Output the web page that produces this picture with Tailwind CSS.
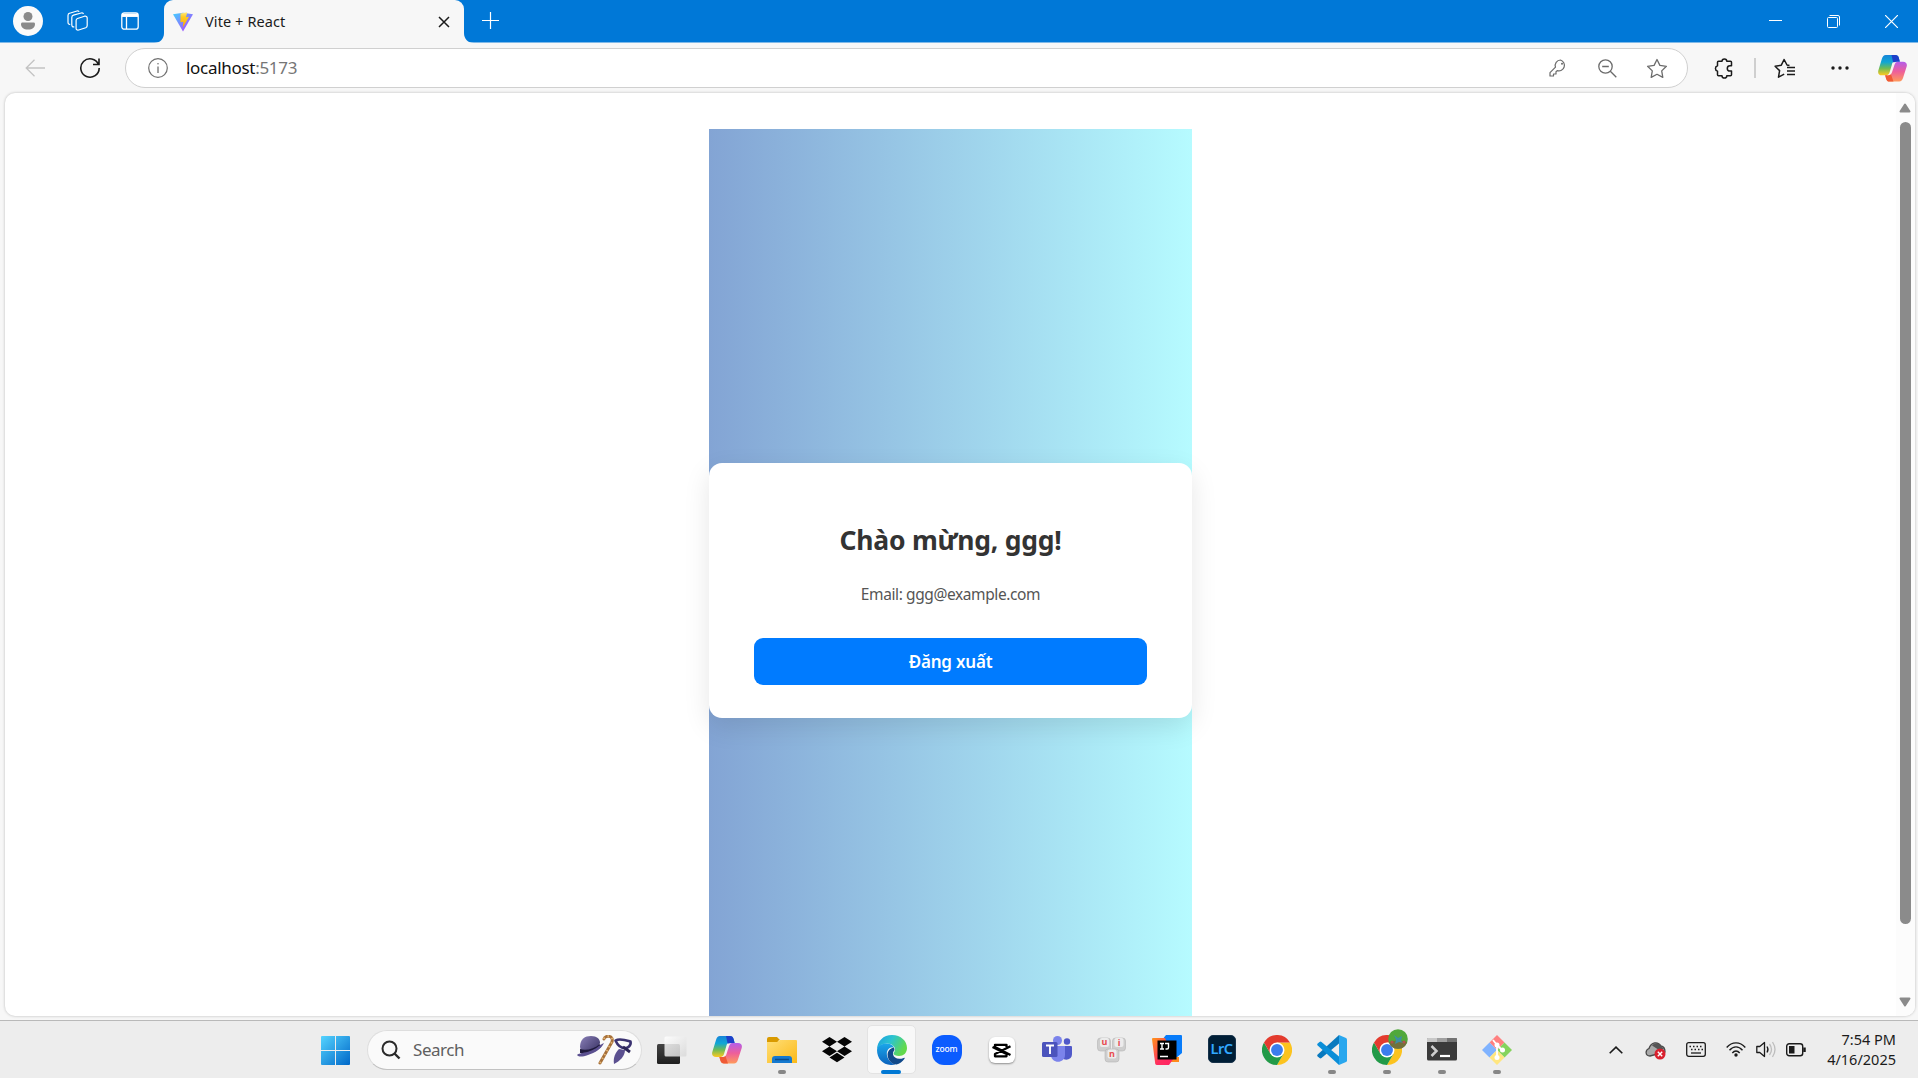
<!DOCTYPE html>
<html lang="vi">
<head>
<meta charset="utf-8">
<title>Vite + React</title>
<script src="https://cdn.jsdelivr.net/npm/@tailwindcss/browser@4"></script>
</head>
<body class="w-[1918px] h-[1078px] overflow-hidden flex flex-col bg-[#f7f7f7] font-['Noto_Sans','Open_Sans',sans-serif]">
<svg class="absolute size-0">
  <defs>
    <linearGradient id="cpL" x1="0" y1="0" x2="0" y2="1"><stop offset="0" stop-color="#1784d8"/><stop offset=".35" stop-color="#0fa6d6"/><stop offset=".65" stop-color="#6cbb57"/><stop offset="1" stop-color="#ffc91f"/></linearGradient>
    <linearGradient id="cpR" x1="0" y1="0" x2="0" y2="1"><stop offset="0" stop-color="#b35eea"/><stop offset=".5" stop-color="#ee5f9a"/><stop offset="1" stop-color="#ff9a5b"/></linearGradient>
    <linearGradient id="viteA" x1="0" y1="0" x2="1" y2="1"><stop offset="0" stop-color="#41d1ff"/><stop offset="1" stop-color="#bd34fe"/></linearGradient>
    <linearGradient id="viteB" x1="0" y1="0" x2="0" y2="1"><stop offset="0" stop-color="#ffea83"/><stop offset=".3" stop-color="#ffcc22"/><stop offset="1" stop-color="#ffa800"/></linearGradient>
    <linearGradient id="win" x1="0" y1="0" x2="1" y2="1"><stop offset="0" stop-color="#55d4ff"/><stop offset="1" stop-color="#0067c8"/></linearGradient>
    <linearGradient id="fold" x1="0" y1="0" x2="1" y2="1"><stop offset="0" stop-color="#ffdf78"/><stop offset="1" stop-color="#fbb917"/></linearGradient>
    <linearGradient id="edgeT" x1="0" y1="0" x2="1" y2=".4"><stop offset="0" stop-color="#1b9de2"/><stop offset=".5" stop-color="#2cc4cf"/><stop offset="1" stop-color="#62d94c"/></linearGradient>
    <linearGradient id="edgeB" x1="0" y1="0" x2="0" y2="1"><stop offset="0" stop-color="#1ba7ea"/><stop offset="1" stop-color="#0c62bd"/></linearGradient>
    <linearGradient id="ijB" x1="0" y1="0" x2="1" y2="1"><stop offset="0" stop-color="#ff9419"/><stop offset=".6" stop-color="#ff2d60"/><stop offset="1" stop-color="#ff2162"/></linearGradient>
    <linearGradient id="hat" x1="0" y1="0" x2="1" y2="1"><stop offset="0" stop-color="#8a80b8"/><stop offset="1" stop-color="#2e2858"/></linearGradient>
    <linearGradient id="tv1" x1="0" y1="0" x2="0" y2="1"><stop offset="0" stop-color="#444"/><stop offset="1" stop-color="#1f1f1f"/></linearGradient>
    <linearGradient id="tv2" x1="0" y1="0" x2="1" y2="1"><stop offset="0" stop-color="#fff"/><stop offset="1" stop-color="#d8d8d8"/></linearGradient>
    <symbol id="copilot" viewBox="0 0 30 28">
      <path d="M8 0h10c2 0 3 1 3.600 3l1 4h-3.500c-2 0-3 1-3.600 3l-2.500 8c-.6 2-2 3-4 3H4c-3 0-4.500-2-3.700-5L4 4c.7-2.500 2-4 4-4z" fill="url(#cpL)"/>
      <path d="M14 0h4c2 0 3 1 3.600 3l1 4h-3.500c-1.500 0-2.500.6-3.200 2z" fill="#1d3fc9"/>
      <path d="M22 27.500H12c-2 0-3-1-3.600-3l-1-3.500h2.500c2 0 3-1 3.600-3l2.500-8c.6-2 2-3 4-3H26c3 0 4.500 2 3.700 5l-3.700 11.500c-.7 2.500-2 4-4 4z" fill="url(#cpR)"/>
      <path d="M16 27.500h-4c-2 0-3-1-3.600-3l-1-3.500h2.500c1.500 0 2.500-.6 3.200-2z" fill="#ef5a36"/>
      <path d="M15.500 7.500h4.200c-1.200 0-2.200 1-2.800 3l-2.400 7.500c-.7 2.200-2 3-3.800 3h-1.600c1.600-.3 2.400-1.500 2.900-3l2.200-7.500c.4-1.500.6-2.400 1.300-3z" fill="#f6f2ee"/>
    </symbol>
    <symbol id="chrome" viewBox="0 0 48 48">
      <path d="M24 12h20.800A24 24 0 0 1 24 48L34.400 30z" fill="#fcc31e"/>
      <path d="M13.600 30 3.200 12A24 24 0 0 0 24 48l10.400-18z" fill="#229a48"/>
      <path d="M24 12h20.800A24 24 0 0 0 3.200 12l10.400 18z" fill="#e33b2e"/>
      <circle cx="24" cy="24" r="12" fill="#fff"/><circle cx="24" cy="24" r="9.500" fill="#3b7ded"/>
    </symbol>
  </defs>
</svg>

<!-- Tab strip -->
<header class="h-[43px] shrink-0 bg-[#0078d7] border-b border-[#7fb9e8] flex items-start">
  <div class="w-[164px] h-[42px] flex items-center relative">
    <div class="ml-[13px] size-[30px] rounded-full bg-[#fafafa] flex items-center justify-center">
      <svg width="16" height="18" fill="#8a8a8a"><circle cx="8" cy="4.500" r="4.500"/><path d="M2.500 10.500h11c1 0 1.500.6 1.500 1.500 0 3.500-2.500 5.500-7 5.500s-7-2-7-5.500c0-.9.500-1.500 1.500-1.500z"/></svg>
    </div>
    <svg class="ml-[24px]" width="22" height="22" fill="none" stroke="#fff" stroke-width="1.200" stroke-linejoin="round"><path d="m10.500 8.500 7-2.300c1.500-.4 2.700.3 2.700 1.800v7.500c0 1-.5 1.800-1.500 2.200l-7 2.300c-1.500.4-2.600-.3-2.600-1.800v-7.700q0-1.400 1.400-2z"/><path d="M7.300 16.800c-1.800.3-2.500-.6-2.500-2V7.500c0-1.200.6-2 1.700-2.300L14.200 3c1.200-.3 2 .1 2.200 1"/><path d="M3.200 14.300c-1.500.2-2.200-.6-2.200-2V5.500c0-1.200.6-2 1.700-2.300L10 1c1-.3 1.800.1 2 .9"/></svg>
    <svg class="ml-[32px]" width="18" height="18" fill="none" stroke="#fff" stroke-width="1.300"><rect x=".8" y=".8" width="16.400" height="16.400" rx="2.500"/><path d="M1 3.200h16" stroke-width="3.500"/><path d="M5.500 5v12"/></svg>
    <svg class="absolute right-0 -bottom-px" width="10" height="10"><path d="M10 0v10H0C6 10 10 6 10 0z" fill="#f7f7f7"/></svg>
  </div>
  <div class="w-[300px] h-[43px] rounded-t-[9px] bg-[#f7f7f7] flex items-center pl-[8px] relative z-10">
    <svg width="22" height="20" viewBox="0 0 22 20"><path d="M1 2.200 11 .8l10 1.400L11 19.500z" fill="url(#viteA)"/><path d="m8.500 1.500 6.700-1.200-1.200 5 3-.6-6.300 11 .7-6-2.900.6z" fill="url(#viteB)"/></svg>
    <span class="ml-[11px] text-[14.500px] leading-5 tracking-[0.100px] text-[#1b1b1b] pb-[2px]">Vite + React</span>
    <svg class="absolute left-[274px] top-[16px]" width="12" height="12" stroke="#1b1b1b" stroke-width="1.500"><path d="m1 1 10 10M11 1 1 11"/></svg>
  </div>
  <div class="flex-1 h-[42px] flex items-start relative">
    <svg class="absolute left-0 -bottom-px" width="10" height="10"><path d="M0 0v10h10C4 10 0 6 0 0z" fill="#f7f7f7"/></svg>
    <svg class="ml-[18px] mt-[12px]" width="17" height="17" stroke="#fff" stroke-width="1.200"><path d="M8.500 0v17M0 8.500h17"/></svg>
    <div class="ml-auto flex mr-[20px] mt-[15px]">
      <svg width="13" height="13" stroke="#fff"><path d="M0 5.500h13"/></svg>
      <svg class="ml-[45px]" width="13" height="13" fill="none" stroke="#fff"><rect x=".5" y="2.500" width="10" height="10" rx="1"/><path d="M2.500.5h8.500q1.500 0 1.500 1.500v8.500"/></svg>
      <svg class="ml-[45px]" width="13" height="13" stroke="#fff" stroke-width="1.200"><path d="m0 0 13 13M13 0 0 13"/></svg>
    </div>
  </div>
</header>

<!-- Toolbar -->
<nav class="h-[50px] shrink-0 flex items-center">
  <svg class="ml-[25px]" width="20" height="18" fill="none" stroke="#c3c3c3" stroke-width="1.300"><path d="M20 9H1.500M9.500.8 1.200 9l8.300 8.200"/></svg>
  <svg class="ml-[34px]" width="22" height="22" fill="none" stroke="#1b1b1b" stroke-width="1.600"><path d="M19.500 7.500A9.200 9.200 0 1 0 20.200 11M20 1.500v6h-6"/></svg>
  <div class="ml-[24px] w-[1563px] h-[40px] rounded-full bg-white border border-[#d0d0d0] flex items-center">
    <svg class="ml-[22px]" width="20" height="20" fill="none" stroke="#707070" stroke-width="1.200"><circle cx="10" cy="10" r="9.300"/><path d="M10 8.500V15" stroke-width="1.300"/><circle cx="10" cy="5.800" r=".8" fill="#707070" stroke="none"/></svg>
    <span class="ml-[18px] pb-px text-[17px] leading-6 tracking-[-0.3px] text-[#111]">localhost<span class="text-[#767676]">:5173</span></span>
    <svg class="ml-auto" width="18" height="18" fill="none" stroke="#6b6b6b" stroke-width="1.200" stroke-linejoin="round"><path d="M11.500 1a5.400 5.400 0 0 0-5 7.200L1 13.700V17h3.500v-2H7v-2.300l1.200-1.100A5.400 5.400 0 1 0 11.500 1z"/><circle cx="13" cy="4.800" r="1" fill="#6b6b6b" stroke="none"/></svg>
    <svg class="ml-[31px]" width="19" height="19" fill="none" stroke="#6b6b6b" stroke-width="1.300"><circle cx="7.500" cy="7.500" r="6.700"/><path d="m12.300 12.300 6 6M4.200 7.500h6.600"/></svg>
    <svg class="ml-[29px] mr-[19px]" width="22" height="21" fill="none" stroke="#6b6b6b" stroke-width="1.300" stroke-linejoin="round"><path d="m11 1.500 2.900 5.900 6.500.9-4.700 4.600 1.100 6.500L11 16.300l-5.800 3.100 1.100-6.500L1.600 8.300l6.500-.9z"/></svg>
  </div>
  <svg class="ml-[25px]" width="20" height="21" fill="none" stroke="#1b1b1b" stroke-width="1.500" stroke-linejoin="round"><path d="M5.500 3.300H9a2.400 2.400 0 0 1 4.800 0h3.700q1 0 1 1v3.400h-1.500a2.600 2.600 0 0 0 0 5.400h1.500v3.600q0 1-1 1h-3.700a2.400 2.400 0 0 1-4.800 0H5.500q-1 0-1-1v-3.600a2.800 2.800 0 0 1 0-5.400V4.300q0-1 1-1z"/></svg>
  <div class="ml-[21px] w-[2px] h-[20px] bg-[#cfcfcf]"></div>
  <svg class="ml-[18px]" width="22" height="21" fill="none" stroke="#1b1b1b" stroke-width="1.500" stroke-linejoin="round"><path d="M15.500 7.500 13 7l-2.900-5.500-2.800 5.700-6.200 1 4.500 4.400-1.100 6.600 5.700-3"/><path d="M13 9.500h8M13 13h8M13 16.500h8"/></svg>
  <svg class="ml-[35px]" width="18" height="4" fill="#1b1b1b"><circle cx="2" cy="2" r="1.700"/><circle cx="9" cy="2" r="1.700"/><circle cx="16" cy="2" r="1.700"/></svg>
  <svg class="ml-[29px]" width="29" height="27"><use href="#copilot"/></svg>
</nav>

<!-- Page viewport -->
<div class="h-[927px] shrink-0 pl-[5px] pr-[3px] pb-[4px]">
  <main class="h-full rounded-[10px] bg-white overflow-hidden flex shadow-[0_0_3px_rgba(0,0,0,0.25)]">
    <section class="w-[1891px] h-full pt-[36px] pl-[704px]">
      <div class="w-[483px] h-[887px] bg-linear-to-r/srgb from-[#83a4d4] to-[#b6fbff] pt-[334px]">
        <div class="h-[255px] rounded-[13px] bg-white shadow-[0_9px_27px_rgba(0,0,0,0.1)] px-[45px] flex flex-col text-center">
          <h1 class="mt-[58px] h-[38px] leading-[38px] text-[26.500px] font-bold tracking-[-0.25px] text-[#333] whitespace-nowrap">Chào mừng, ggg!</h1>
          <p class="mt-[22px] h-[26px] leading-[26px] text-[15.500px] tracking-[-0.4px] text-[#555]">Email: ggg@example.com</p>
          <button class="mt-[31px] h-[47px] rounded-[9px] bg-[#007bff] text-white text-[17px] font-semibold tracking-[-0.2px]">Đăng xuất</button>
        </div>
      </div>
    </section>
    <div class="w-[19px] h-full bg-[#fcfcfc] flex flex-col items-center pr-px">
      <svg class="mt-[10px]" width="12" height="10"><path d="M6 1.500 10.500 8.500h-9z" fill="#8b8b8b" stroke="#8b8b8b" stroke-width="2" stroke-linejoin="round"/></svg>
      <div class="mt-[9px] w-[11px] h-[802px] rounded-full bg-[#8b8b8b]"></div>
      <svg class="mt-[73px]" width="12" height="10"><path d="M6 8.500 10.500 1.500h-9z" fill="#8b8b8b" stroke="#8b8b8b" stroke-width="2" stroke-linejoin="round"/></svg>
    </div>
  </main>
</div>

<!-- Taskbar -->
<footer class="h-[58px] shrink-0 bg-[#ededed] border-t border-[#b9b9b9] flex items-center">
  <svg class="ml-[321px] mt-px" width="29" height="29" fill="url(#win)"><path d="M1 0h13v14H0V1q0-1 1-1zM15 0h13q1 0 1 1v13H15zM0 15h14v14H1q-1 0-1-1zM15 15h14v13q0 1-1 1H15z"/></svg>
  <div class="ml-[17px] w-[275px] h-[40px] rounded-full bg-[#fafafa] border border-[#dedede] border-b-[#c2c2c2] flex items-center relative">
    <svg class="ml-[13px]" width="20" height="20" fill="none" stroke="#2b2b2b" stroke-width="2"><circle cx="8.500" cy="8.500" r="7"/><path d="m13.500 13.500 5 5" stroke-width="2.400"/></svg>
    <span class="ml-[12px] text-[17px] leading-6 tracking-[-0.45px] text-[#5f5f5f]">Search</span>
    <svg class="absolute left-[208px] top-[4px]" width="58" height="31">
      <path d="M4 12C4 4 9 1 15 1s9 3 9 7l-4 8-14 5z" fill="url(#hat)"/><path d="M4 14c6 2 14 0 20-5l1 3C20 17 12 19 4 18z" fill="#1f1a3c"/><path d="M1 20c2 2 5 2 11 0 7-2 14-7 16-12-6 3-8 6-14 8-5 2-11 2-13 4z" fill="#5b5090"/>
      <path d="M28 4c1-4 10-4 8 3L24 28" fill="none" stroke="#a6703a" stroke-width="3" stroke-linecap="round"/><path d="M28 4c1-4 10-4 8 3L24 28" fill="none" stroke="#e0b273" stroke-width="2" stroke-dasharray="1.500 3"/>
      <path d="M39.500 5.500c4-2.500 10-.5 15 1 1 4-3 7-6 6.500-4 0-7-3-9-7.500z" fill="none" stroke="#3b3371" stroke-width="2.600" stroke-linejoin="round"/><path d="m43 14 6 1c0 6-5 11-11 14-1-6 1-11 5-15z" fill="#5b5090"/><path d="m47 12 7 5" stroke="#2c2558" stroke-width="2.800"/>
    </svg>
  </div>
  <div class="ml-[2px] flex [&>div]:w-[55px] [&>div]:h-[57px] [&>div]:flex [&>div]:items-center [&>div]:justify-center [&>div]:relative">
    <div><svg width="30" height="30"><rect x="0" y="9" width="23" height="20" rx="1.500" fill="url(#tv1)"/><rect x="7.500" y="1.500" width="22" height="20" rx="1.500" fill="url(#tv2)" fill-opacity=".85"/></svg></div>
    <div><svg width="30" height="28"><use href="#copilot"/></svg></div>
    <div>
      <svg width="30" height="27" class="mt-[2px]"><path d="M0 2q0-2 2-2h8l3 3h-1l-2 3H0z" fill="#d99a00"/><path d="M0 5h10l3-2h16q1 0 1 1v22H0z" fill="url(#fold)"/><path d="M5 26v-4q0-3 3-3h14q3 0 3 3v4z" fill="#1679cf"/><path d="M8 22.500h14" stroke="#0b4c8c" stroke-width="1.500"/></svg>
      <i class="absolute left-[24px] top-[49px] w-[8px] h-[4px] rounded-full bg-[#868686]"></i>
    </div>
    <div><svg width="30" height="26" fill="#050505"><path d="m7.500 0 7.500 4.800-7.500 4.700L0 4.800zM22.500 0 30 4.800l-7.500 4.700L15 4.800zM7.500 9.500l7.500 4.800L7.500 19 0 14.300zM22.500 9.500l7.500 4.800-7.500 4.700-7.500-4.700zM15 15.800l7.500 4.700L15 25.300l-7.500-4.800z"/></svg></div>
    <div>
      <span class="absolute left-[3px] top-[4px] size-[49px] rounded-[5px] bg-[#f8f8f8] border border-[#e3e3e3]"></span>
      <svg class="relative" width="30" height="30" viewBox="0 0 30 30"><path d="M0 15C0 6 6.500 0 15 0c9 0 15 6 15 13 0 5-3.500 8-8 8-3 0-5.500-1-5.500-2.500 0-1 1.500-1.500 1.500-4 0-3-3-6-8-6-5.500 0-9 3-10 6.500z" fill="url(#edgeT)"/><path d="M0 15c.5-4 4.500-6.500 9.500-6.500 3.500 0 6.500 1.500 7.500 4-4.500-1-8 3-7 8 1 5 5 8 8.500 9C8 32 0 25 0 15z" fill="url(#edgeB)"/><path d="M17 12.500c-4 .5-7 4-6.300 8.500.9 5.500 5 8.500 8.800 8.500 3-.8 6-3 8-5.800.5-.8 0-1.200-.8-.8-5 2.200-10 .5-10.700-3.600-.3-2 .5-3 1.500-4.300z" fill="#114a8b"/></svg>
      <i class="absolute left-[17px] top-[49px] w-[20px] h-[4px] rounded-full bg-[#0078d4]"></i>
    </div>
    <div><span class="size-[30px] rounded-[12px] bg-[#0b5cff] text-white text-[8.500px] leading-[28px] text-center font-medium tracking-[-0.1px]">zoom</span></div>
    <div><span class="mt-px size-[26px] rounded-[6px] bg-white shadow-[0_1px_2px_rgba(0,0,0,0.4)] flex items-center justify-center"><svg width="19" height="15" fill="none" stroke="#000" stroke-width="2.300" stroke-linejoin="round"><path d="M18.500 3.200 3 11v2.300h11.500V11L.5 4M3 5V1.800h11.500V4M18.500 12 3 4"/></svg></span></div>
    <div><svg width="30" height="27"><circle cx="15.500" cy="4.500" r="4.500" fill="#7b83eb"/><circle cx="25" cy="5.500" r="3.200" fill="#5059c9"/><path d="M20 10h9q1 0 1 1v7c0 6-7 7-10 4z" fill="#5059c9"/><path d="M9 10h14v9c0 9-14 9-14 0z" fill="#7b83eb"/><rect y="6" width="15.500" height="15" rx="1.500" fill="#4b53bc"/><path d="M4 9.500h8M8 9.500V18" stroke="#fff" stroke-width="1.900"/></svg></div>
    <div><svg class="mt-px" width="30" height="26" font-size="9" font-weight="bold" fill="#e84c50" text-anchor="middle"><g fill="#cecece" stroke="#b5b5b5" stroke-width=".6"><rect x=".5" y="1" width="13" height="13" rx="3"/><rect x="15.500" y="1" width="13" height="13" rx="3"/><rect x="8" y="12" width="14" height="13" rx="3"/></g><g fill="#ececec"><rect x="3" y="1" width="9" height="9" rx="2"/><rect x="17.500" y="1" width="9" height="9" rx="2"/><rect x="10.500" y="12.500" width="9" height="9" rx="2"/></g><text x="7.500" y="8">u</text><text x="22" y="9">i</text><text x="15" y="19.500">n</text></svg></div>
    <div><svg width="30" height="30"><path d="M10 5l4-5h15q1 0 1 1v17l-6 5z" fill="#087cfa"/><path d="M20 22h7v5H19z" fill="#ff8a1d"/><path d="M0 4q0-1 1-1h12l9 20-5 7H5q-1.500 0-1.800-1.500z" fill="url(#ijB)"/><rect x="5.500" y="5.500" width="19" height="19"/><path d="M8 8.500h4M10 8.500V14M8 14h4M13 8.500h3.500v4q0 1.500-1.500 1.500h-1.500M8 21.500h8" fill="none" stroke="#fff" stroke-width="1.400"/></svg></div>
    <div><span class="mb-[2px] size-[28px] rounded-[5px] bg-[#001e36] border border-[#17324a] text-[#31a8ff] text-[14.500px] font-semibold tracking-[-0.5px] leading-[24px] text-center">LrC</span></div>
    <div><svg width="30" height="30"><use href="#chrome"/></svg></div>
    <div>
      <svg width="30" height="30"><path d="m22 0 7 3q1 .5 1 1.500v21q0 1-1 1.500l-7 3z" fill="#29a7ee"/><path d="M22 0v8.500L4.500 23q-1 .8-2 0L.7 21.500q-1-1 0-2z" fill="#0879be"/><path d="M22 30v-8.500L4.500 7q-1-.8-2 0L.7 8.500q-1 1 0 2z" fill="#0a8ed8"/></svg>
      <i class="absolute left-[24px] top-[49px] w-[8px] h-[4px] rounded-full bg-[#868686]"></i>
    </div>
    <div>
      <svg width="30" height="30"><use href="#chrome"/></svg>
      <svg class="absolute left-[29px] top-[8px]" width="20" height="20"><circle cx="10" cy="10" r="9.800" fill="#50a83b"/><path d="M1 13q9-3 18 0-2 7-9 6.800Q3 20 1 13z" fill="#72703b"/><path d="m6 6 4 3 4-2-1 5 3 2-5-1-4 2 1-4z" fill="#3d8fa2"/><circle cx="4" cy="13" r="1.500" fill="#b4524a"/><circle cx="16" cy="13" r="1.500" fill="#b4524a"/></svg>
      <i class="absolute left-[24px] top-[49px] w-[8px] h-[4px] rounded-full bg-[#868686]"></i>
    </div>
    <div>
      <svg width="30" height="23"><rect width="30" height="22.500" rx="1.500" fill="#3b3b3b"/><path d="M1 0h9v4H0V1q0-1 1-1z" fill="#c8c8c8"/><path d="M10 0h10v4H10z" fill="#a0a0a0"/><path d="M20 0h9q1 0 1 1v3H20z" fill="#737373"/><path d="m4.500 8 5 5-5 5" fill="none" stroke="#cfcfcf" stroke-width="2.500"/><path d="M13 18h10" stroke="#fff" stroke-width="2.200"/></svg>
      <i class="absolute left-[24px] top-[49px] w-[8px] h-[4px] rounded-full bg-[#868686]"></i>
    </div>
    <div>
      <svg width="30" height="30"><path d="m15 0 7.500 7.500L15 15 7.500 7.500z" fill="#ff8080"/><path d="m22.500 7.500 7.500 7.500-7.500 7.500L15 15z" fill="#84d35c"/><path d="m7.500 7.500 7.500 7.500-7.500 7.500L0 15z" fill="#80b3ff"/><path d="m15 15 7.500 7.500L15 30l-7.500-7.500z" fill="#ffe680"/><path d="m11 5 4 5v14M15 10l5 5" fill="none" stroke="#fff" stroke-width="1.800"/><g fill="#fff"><circle cx="15" cy="10" r="2.500"/><circle cx="15" cy="22.500" r="2.500"/><circle cx="20.500" cy="15" r="2.500"/></g></svg>
      <i class="absolute left-[24px] top-[49px] w-[8px] h-[4px] rounded-full bg-[#868686]"></i>
    </div>
  </div>
  <div class="ml-auto mr-[22px] flex items-center">
    <svg width="14" height="8" fill="none" stroke="#1b1b1b" stroke-width="1.600"><path d="m.7 7.300 6.300-6.200 6.300 6.200"/></svg>
    <svg class="ml-[22px] mt-[3px]" width="22" height="18"><path d="M5 14C0 14 0 8 4 6.500 6 0 13-1 16 4c3 .5 4 3 4 6z" fill="#a9a9a9" stroke="#4a4a4a" stroke-width="1.300"/><path d="M7 3.500C10 0 14 1 16 4l3 3-5 1z" fill="#555"/><circle cx="15" cy="12" r="5.500" fill="#d9202e"/><path d="m12.800 9.800 4.400 4.400m0-4.400-4.400 4.400" stroke="#fff" stroke-width="1.400"/></svg>
    <svg class="ml-[19px] mb-px" width="20" height="15" fill="none" stroke="#1b1b1b" stroke-width="1.300"><rect x=".7" y=".7" width="18.600" height="13.600" rx="2"/><path d="M3.500 4.500h14M5 7.500h12" stroke-dasharray="1.500 2" stroke-width="1.500"/><path d="M5 11h10"/></svg>
    <svg class="ml-[20px]" width="20" height="15" fill="none" stroke="#1b1b1b" stroke-width="1.400"><path d="M.7 5.500C6-.7 14-.7 19.300 5.500M3.500 8.300c4-4.600 9-4.600 13 0M6.300 11c2.300-2.700 5.100-2.700 7.400 0"/><circle cx="10" cy="13" r="1.700" fill="#1b1b1b" stroke="none"/></svg>
    <svg class="ml-[10px]" width="20" height="17" fill="none" stroke="#1b1b1b" stroke-width="1.300" stroke-linejoin="round"><path d="M.8 5.500h3L8.500 1.500v14l-4.700-4h-3zM11 5.500q2 3 0 6"/><path d="M13.500 3q4 5.500 0 11M16.500 1q5 7.500 0 15" stroke="#bdbdbd"/></svg>
    <svg class="ml-[10px]" width="20" height="14" fill="none" stroke="#1b1b1b" stroke-width="1.400"><rect x=".7" y=".7" width="16" height="12" rx="2.500"/><path d="M3 3h5.500v7.500H3z" fill="#1b1b1b" stroke="none"/><path d="M18.500 4.500v4.500" stroke-width="2.500"/></svg>
    <div class="w-[90px] pb-[2px] text-right text-[14.500px] leading-[20px] tracking-[0] text-[#1b1b1b] whitespace-nowrap">7:54 PM<br>4/16/2025</div>
  </div>
</footer>
</body>
</html>
